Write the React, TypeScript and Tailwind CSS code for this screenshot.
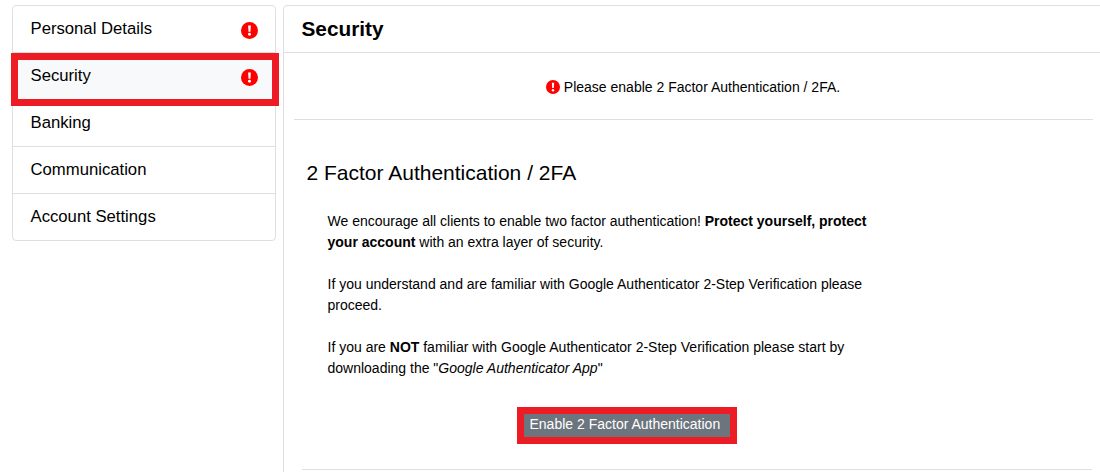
function AlertIcon({ className }: { className: string }) {
  return (
    <svg viewBox="0 0 16 16" className={className}>
      <circle cx="8" cy="8" r="8" fill="#ff0000" />
      <path d="M6.7 3.2h2.6l-.4 6h-1.8z" fill="#fff" />
      <circle cx="8" cy="11.6" r="1.4" fill="#fff" />
    </svg>
  );
}

const items = [
  { label: "Personal Details", alert: true },
  { label: "Security", alert: true, active: true },
  { label: "Banking" },
  { label: "Communication" },
  { label: "Account Settings" },
];

export default function App() {
  return (
    <div className="flex h-[472px] w-[1100px] items-start gap-[7px] overflow-hidden bg-white pl-3 pt-[5px] text-[#000] [font-family:'Liberation_Sans',Arial,sans-serif]">
      <nav className="relative w-[264px] shrink-0 rounded border border-[#dfdfdf]">
        {items.map((item, i) => (
          <div
            key={item.label}
            className={`relative flex items-start justify-between pl-[17.5px] pr-[17px] text-[16.7px] leading-[22px] ${
              i > 0 ? "h-[47px] border-t border-[#dfdfdf] pt-[12px]" : "h-[46px] pt-[12px]"
            } ${item.active ? "bg-[#f8f9fa]" : ""}`}
          >
            <span>{item.label}</span>
            {item.alert && <AlertIcon className="mt-[4px] mr-[0.5px] h-[17px] w-[17px]" />}
          </div>
        ))}
        <div className="absolute left-[-2px] top-[47px] h-[53px] w-[268px] border-[7px] border-[#ed1c24]" />
      </nav>
      <main className="h-[480px] w-[830px] shrink-0 rounded border border-[#dfdfdf]">
        <header className="h-[47px] border-b border-[#dfdfdf] pl-[17.5px] pt-[10px] text-[20.8px] font-bold leading-[26px]">
          Security
        </header>
        <div className="mx-[10px] flex h-[67px] w-[799px] items-center justify-center gap-[4px] border-b border-[#dfdfdf] pt-[3px] pr-[1px] text-[14px] leading-[21px]">
          <AlertIcon className="mb-[2px] h-[14px] w-[14px]" />
          <span>Please enable 2 Factor Authentication / 2FA.</span>
        </div>
        <section className="pl-[22.5px] pt-[39px]">
          <h2 className="text-[21px] font-normal leading-[28px]">2 Factor Authentication / 2FA</h2>
          <div className="ml-[21px] mt-[24px] w-[545px] text-[14px] leading-[21px]">
            <p>
              We encourage all clients to enable two factor authentication!{" "}
              <b>Protect yourself, protect your account</b> with an extra layer of security.
            </p>
            <p className="mt-[21px]">
              If you understand and are familiar with Google Authenticator 2-Step Verification please proceed.
            </p>
            <p className="mt-[21px]">
              If you are <b>NOT</b> familiar with Google Authenticator 2-Step Verification please start by downloading the "
              <i>Google Authenticator App</i>"
            </p>
          </div>
          <div className="ml-[217.5px] mt-[35px]">
            <button className="block h-[23px] w-[206px] bg-[#6c757d] pb-[3px] pl-[5.5px] text-left text-[14px] leading-[20px] text-white outline-[7px] outline-[#ed1c24]">
              Enable 2 Factor Authentication
            </button>
          </div>
          <div className="ml-[-4.5px] mt-[32px] w-[790px] border-t border-[#dfdfdf]" />
        </section>
      </main>
    </div>
  );
}
